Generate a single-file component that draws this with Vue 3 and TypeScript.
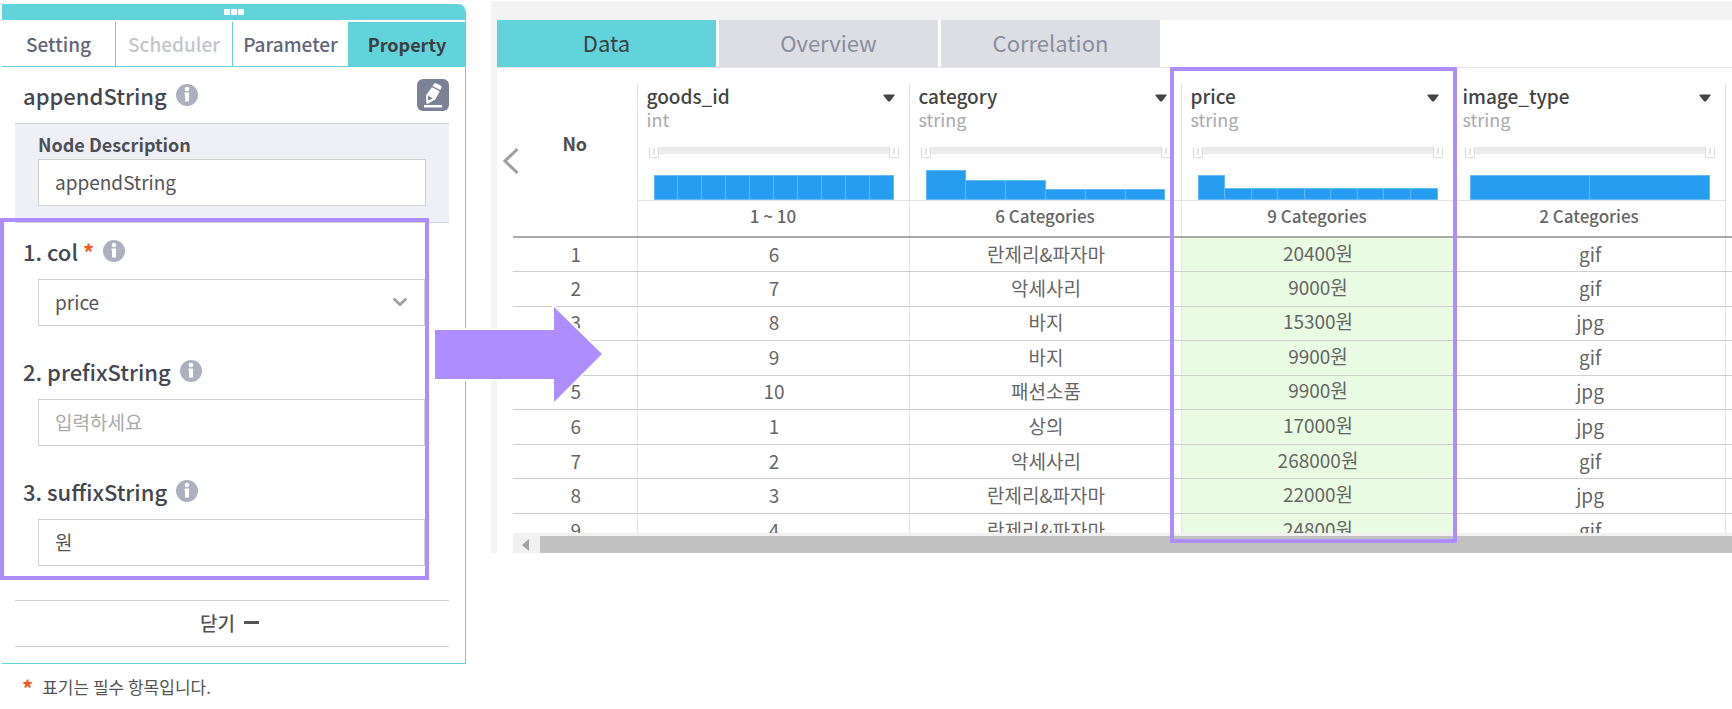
<script setup lang="ts">
import { ref } from 'vue'

interface Column {
  name: string
  type: string
  summary: string
  bars: number[]
}

const panelTabs = [
  { label: 'Setting', disabled: false },
  { label: 'Scheduler', disabled: true },
  { label: 'Parameter', disabled: false },
  { label: 'Property', disabled: false },
]
const activePanelTab = ref('Property')

const dataTabs = ['Data', 'Overview', 'Correlation']
const activeDataTab = ref('Data')

const description = ref('appendString')
const col = ref('price')
const prefixString = ref('')
const suffixString = ref('원')

const columns: Column[] = [
  { name: 'goods_id', type: 'int', summary: '1 ~ 10', bars: Array(10).fill(25) },
  { name: 'category', type: 'string', summary: '6 Categories', bars: [30, 20, 20, 11, 11, 11] },
  { name: 'price', type: 'string', summary: '9 Categories', bars: [25, 12, 12, 12, 12, 12, 12, 12, 12] },
  { name: 'image_type', type: 'string', summary: '2 Categories', bars: [25, 25] },
]

const rows: [number, string, string, string][] = [
  [6, '란제리&파자마', '20400원', 'gif'],
  [7, '악세사리', '9000원', 'gif'],
  [8, '바지', '15300원', 'jpg'],
  [9, '바지', '9900원', 'gif'],
  [10, '패션소품', '9900원', 'jpg'],
  [1, '상의', '17000원', 'jpg'],
  [2, '악세사리', '268000원', 'gif'],
  [3, '란제리&파자마', '22000원', 'jpg'],
  [4, '란제리&파자마', '24800원', 'gif'],
]
</script>

<template>
  <div class="page">
    <aside class="side">
      <section class="panel">
        <div class="grip"><i></i><i></i><i></i></div>
        <nav class="panel-tabs">
          <button
            v-for="tab in panelTabs"
            :key="tab.label"
            type="button"
            :disabled="tab.disabled"
            :class="{ active: activePanelTab === tab.label }"
            @click="activePanelTab = tab.label"
          >{{ tab.label }}</button>
        </nav>

        <div class="panel-body">
          <header class="node-head">
            <h2>appendString</h2>
            <svg class="info" viewBox="0 0 22 22"><circle cx="11" cy="11" r="11" /><circle class="mark" cx="11" cy="5" r="2.3" /><path class="mark" d="M8.500 8.500h4.500v9H9V10.500h-.5z" /></svg>
            <button type="button" class="edit" aria-label="Edit">
              <svg viewBox="0 0 32 32"><path d="M16.500 5.500q1-1.800 3-1l4 2q1.800 1 .8 2.800l-1 1.700-7.700-3.900zM15 8.300l7.700 3.900-4.400 8.300-8 4.500-.9-.5-.4-8.500zM11 16.500l-.2 4 1.400.7 3.300-2z" fill-rule="evenodd" /><path d="M7 26h18v2.500H7z" /></svg>
            </button>
          </header>

          <div class="node-desc">
            <label for="desc">Node Description</label>
            <input id="desc" v-model="description" type="text" />
          </div>

          <div class="fields">
            <div class="field">
              <div class="field-head">
                <label for="col">1. col <span class="req">*</span></label>
                <svg class="info" viewBox="0 0 22 22"><circle cx="11" cy="11" r="11" /><circle class="mark" cx="11" cy="5" r="2.3" /><path class="mark" d="M8.500 8.500h4.500v9H9V10.500h-.5z" /></svg>
              </div>
              <div class="select">
                <select id="col" v-model="col">
                  <option v-for="c in columns" :key="c.name">{{ c.name }}</option>
                </select>
                <svg viewBox="0 0 16 10"><path d="M1.500 1.500 8 7.500l6.500-6" /></svg>
              </div>
            </div>
            <div class="field">
              <div class="field-head">
                <label for="prefix">2. prefixString</label>
                <svg class="info" viewBox="0 0 22 22"><circle cx="11" cy="11" r="11" /><circle class="mark" cx="11" cy="5" r="2.3" /><path class="mark" d="M8.500 8.500h4.500v9H9V10.500h-.5z" /></svg>
              </div>
              <input id="prefix" v-model="prefixString" type="text" placeholder="입력하세요" />
            </div>
            <div class="field">
              <div class="field-head">
                <label for="suffix">3. suffixString</label>
                <svg class="info" viewBox="0 0 22 22"><circle cx="11" cy="11" r="11" /><circle class="mark" cx="11" cy="5" r="2.3" /><path class="mark" d="M8.500 8.500h4.500v9H9V10.500h-.5z" /></svg>
              </div>
              <input id="suffix" v-model="suffixString" type="text" />
            </div>
            <div class="highlight highlight-fields"></div>
          </div>

          <button type="button" class="close">닫기 <i></i></button>
        </div>
      </section>
      <p class="note"><span class="req">*</span> 표기는 필수 항목입니다.</p>
    </aside>

    <main class="viewer">
      <nav class="data-tabs">
        <button
          v-for="tab in dataTabs"
          :key="tab"
          type="button"
          :class="{ active: activeDataTab === tab }"
          @click="activeDataTab = tab"
        >{{ tab }}</button>
      </nav>

      <div class="grid-area">
        <div class="grid-clip">
          <table>
            <colgroup>
              <col class="c-no" />
              <col v-for="c in columns" :key="c.name" class="c-data" />
              <col />
            </colgroup>
            <thead>
              <tr>
                <th class="no">No</th>
                <th v-for="c in columns" :key="c.name">
                  <div class="col-title">
                    <span>{{ c.name }}</span>
                    <button type="button" :aria-label="c.name + ' menu'">
                      <svg viewBox="0 0 12 8"><path d="M1 .5h10q1 .3.4 1.200L7 7.200q-1 .9-2 0L.6 1.700Q0 .8 1 .5z" /></svg>
                    </button>
                  </div>
                  <div class="col-type">{{ c.type }}</div>
                  <div class="slider">
                    <input type="range" value="0" :aria-label="c.name + ' minimum'" />
                    <input type="range" value="100" :aria-label="c.name + ' maximum'" />
                  </div>
                  <div class="chart">
                    <i v-for="(h, i) in c.bars" :key="i" :style="{ height: h + 'px' }"></i>
                  </div>
                  <div class="summary">{{ c.summary }}</div>
                </th>
                <th></th>
              </tr>
            </thead>
            <tbody>
              <tr v-for="(row, r) in rows" :key="r">
                <td>{{ r + 1 }}</td>
                <td v-for="(value, i) in row" :key="i" :class="{ marked: i === 2 }">{{ value }}</td>
                <td></td>
              </tr>
            </tbody>
          </table>
        </div>
        <div class="scrollbar">
          <button type="button" aria-label="Scroll left"><svg viewBox="0 0 8 12"><path d="M7 0v12L0 6z" /></svg></button>
          <div class="thumb"></div>
        </div>
        <button type="button" class="prev" aria-label="Previous columns">
          <svg viewBox="0 0 16 26"><path d="M14.500 1 2 13l12.500 12" /></svg>
        </button>
        <div class="highlight highlight-column"></div>
      </div>
    </main>

    <svg class="arrow" viewBox="0 0 170 100">
      <path class="halo" d="M1 26h119V3l48 47-48 47V75H1" />
      <path d="M1 26h119V3l48 47-48 48V75H1z" />
    </svg>
  </div>
</template>

<style>
body {
  margin: 0;
  background: #fff;
}
</style>

<style scoped>
.page {
  --teal: #62d3da;
  --violet: #ae8eff;
  --line: #d0d0d0;
  position: relative;
  display: flex;
  align-items: flex-start;
  gap: 25px;
  min-height: 100vh;
  overflow: hidden;
  font-family: 'Noto Sans CJK KR', 'Noto Sans', sans-serif;
  font-size: 19px;
  line-height: 26px;
  color: #555;
}
.page * {
  box-sizing: border-box;
}
button,
input,
select {
  margin: 0;
  padding: 0;
  border: 0;
  border-radius: 0;
  background: none;
  font: inherit;
  color: inherit;
}
svg {
  display: block;
}

.side {
  flex: none;
  width: 466px;
  padding: 4px 0 0 2px;
}
.panel {
  border: solid var(--teal);
  border-width: 0 1px 1px 0;
  border-top-right-radius: 8px;
}
.grip {
  display: flex;
  justify-content: center;
  align-items: center;
  gap: 1px;
  height: 16px;
  border-top-right-radius: 7px;
  background: var(--teal);
}
.grip i {
  width: 6px;
  height: 6px;
  border-radius: 1px;
  background: #fff;
}
.panel-tabs {
  display: grid;
  grid-template-columns: 113px 117px 116px 1fr;
  height: 47px;
  padding-top: 2px;
  border-bottom: 1px solid var(--teal);
}
.panel-tabs button {
  padding-bottom: 1px;
  font-weight: 500;
  color: #636677;
}
.panel-tabs button + button {
  border-left: 1px solid var(--teal);
}
.panel-tabs button:disabled {
  color: #c5c6cc;
}
.panel-tabs button.active {
  background: var(--teal);
  font-size: 18px;
  font-weight: 700;
  color: #3c4043;
}

.panel-body {
  padding: 0 16px 16px 13px;
}
.node-head {
  display: flex;
  align-items: center;
  height: 56px;
  padding-left: 8px;
}
h2 {
  margin: 0;
  font-size: 22px;
  font-weight: 500;
  line-height: 32px;
  color: #444750;
}
.info {
  width: 22px;
  height: 22px;
  margin-left: 9px;
  fill: #adb1bf;
}
.info .mark {
  fill: #fff;
}
.edit {
  width: 32px;
  height: 32px;
  margin-left: auto;
  border-radius: 6px;
  background: #7c8295;
}
.edit svg {
  fill: #fff;
}
.node-desc {
  height: 100px;
  padding: 7px 23px 0;
  border: solid var(--line);
  border-width: 1px 0;
  background: #eff0f5;
}
.node-desc label {
  display: block;
  height: 28px;
  font-size: 18px;
  font-weight: 700;
  color: #4d4f57;
}
input[type='text'],
select {
  display: block;
  width: 100%;
  height: 47px;
  padding: 0 17px 2px 16px;
  border: 1px solid var(--line);
  background: #fff;
}
input::placeholder {
  color: #aaa;
  opacity: 1;
}
select {
  appearance: none;
}

.fields {
  position: relative;
  padding: 14px 24px 34px 8px;
}
.field + .field {
  padding-top: 31px;
}
.field-head {
  display: flex;
  align-items: center;
  height: 42px;
  padding-bottom: 14px;
  font-size: 22px;
  font-weight: 500;
  color: #444750;
}
.field > input {
  width: calc(100% - 15px);
  margin-left: 15px;
}
.req {
  font-size: 22px;
  font-weight: 700;
  color: #f15a24;
}
.select {
  position: relative;
  margin-left: 15px;
}
.select svg {
  position: absolute;
  top: 18px;
  right: 17px;
  width: 16px;
  height: 10px;
  fill: none;
  stroke: #a3a3a3;
  stroke-width: 3;
  pointer-events: none;
}
.highlight {
  position: absolute;
  border: 4px solid var(--violet);
  pointer-events: none;
}
.highlight-fields {
  top: -5px;
  right: 20px;
  bottom: 20px;
  left: -15px;
}
.close {
  display: flex;
  justify-content: center;
  align-items: center;
  gap: 9px;
  width: 100%;
  height: 47px;
  padding: 0 5px 2px 0;
  border: solid var(--line);
  border-width: 1px 0;
  font-weight: 500;
}
.close i {
  width: 15px;
  height: 3px;
  background: #555;
}
.note {
  display: flex;
  gap: 9px;
  margin: 0;
  padding: 10px 0 0 20px;
  font-size: 17px;
}

.viewer {
  flex: 1;
  min-width: 0;
  margin-top: 1px;
  border: solid #f3f3f3;
  border-width: 19px 0 0 6px;
}
.data-tabs {
  display: flex;
  gap: 3px;
  border-bottom: 1px solid #e6e6e6;
}
.data-tabs button {
  width: 219px;
  height: 47px;
  padding-bottom: 3px;
  background: #dddee4;
  font-size: 22px;
  color: #8a8d9c;
}
.data-tabs button.active {
  background: var(--teal);
  color: #3c4043;
}
.grid-area {
  position: relative;
  padding-left: 16px;
}
.grid-clip {
  height: 465px;
  padding-top: 16px;
  overflow: hidden;
}
table {
  width: 100%;
  min-width: 1219px;
  table-layout: fixed;
  border-collapse: collapse;
  text-align: center;
}
.c-no {
  width: 124px;
}
.c-data {
  width: 272px;
}
th {
  height: 153px;
  padding: 0;
  border-bottom: 2px solid #aaa;
  vertical-align: top;
}
th.no {
  vertical-align: middle;
  padding-bottom: 35px;
  font-size: 18px;
  color: #4d4d4d;
}
th + th,
td + td {
  border-left: 1px solid #e4e4e4;
}
.col-title {
  display: flex;
  justify-content: space-between;
  align-items: center;
  height: 24px;
  padding: 0 14px 0 9px;
  line-height: 24px;
  font-weight: 500;
  color: #444;
}
.col-title button {
  padding-top: 4px;
}
.col-title svg {
  width: 12px;
  height: 8px;
  fill: #444;
}
.col-type {
  height: 39px;
  padding-left: 9px;
  text-align: left;
  font-size: 18px;
  line-height: 22px;
  font-weight: 400;
  color: #aaa;
}
.slider {
  position: relative;
  width: 250px;
  height: 11px;
  margin-left: 11px;
  background: linear-gradient(#e6e6e6, #efefef) 5px 0 / 240px 7px no-repeat;
}
.slider input {
  position: absolute;
  inset: 0;
  width: 100%;
  height: 11px;
  appearance: none;
  pointer-events: none;
}
.slider input::-webkit-slider-thumb {
  appearance: none;
  width: 10px;
  height: 11px;
  border: 1px solid #dcdcdc;
  border-top: 0;
  border-radius: 0 0 2px 2px;
  background: linear-gradient(#e4e4e4, #e4e4e4) center 1px / 2px 6px no-repeat #fff;
  pointer-events: auto;
}
.chart {
  display: flex;
  align-items: flex-end;
  height: 43px;
  padding: 0 15px 0 16px;
  border-bottom: 1px solid #e4e4e4;
}
.chart i {
  flex: 1;
  border: 1px solid #62b8f8;
  background: #279df1;
}
.chart i + i {
  border-left: 0;
}
.summary {
  height: 34px;
  line-height: 30px;
  font-size: 17px;
  font-weight: 500;
  color: #666;
}
tbody {
  height: 311px;
}
tbody tr {
  height: 34px;
}
td {
  padding: 0 0 2px 2px;
  border-bottom: 1px solid var(--line);
  color: #666;
}
td.marked {
  padding-bottom: 4px;
  background: #eafbe3;
}
.scrollbar {
  display: flex;
  height: 20px;
  padding-top: 3px;
  background: #f1f1f1;
}
.scrollbar button {
  width: 27px;
  padding-left: 9px;
}
.scrollbar svg {
  width: 8px;
  height: 12px;
  fill: #a3a3a3;
}
.thumb {
  flex: 1;
  background: #c1c1c1;
}
.prev {
  position: absolute;
  top: 80px;
  left: 6px;
}
.prev svg {
  width: 16px;
  height: 26px;
  fill: none;
  stroke: #a0a0a0;
  stroke-width: 3;
}
.highlight-column {
  top: -1px;
  bottom: 10px;
  left: 673px;
  width: 287px;
}
.arrow {
  position: absolute;
  top: 304px;
  left: 434px;
  width: 170px;
  height: 100px;
  fill: var(--violet);
  pointer-events: none;
}
.arrow .halo {
  fill: none;
  stroke: #fff;
  stroke-width: 4;
}
</style>
